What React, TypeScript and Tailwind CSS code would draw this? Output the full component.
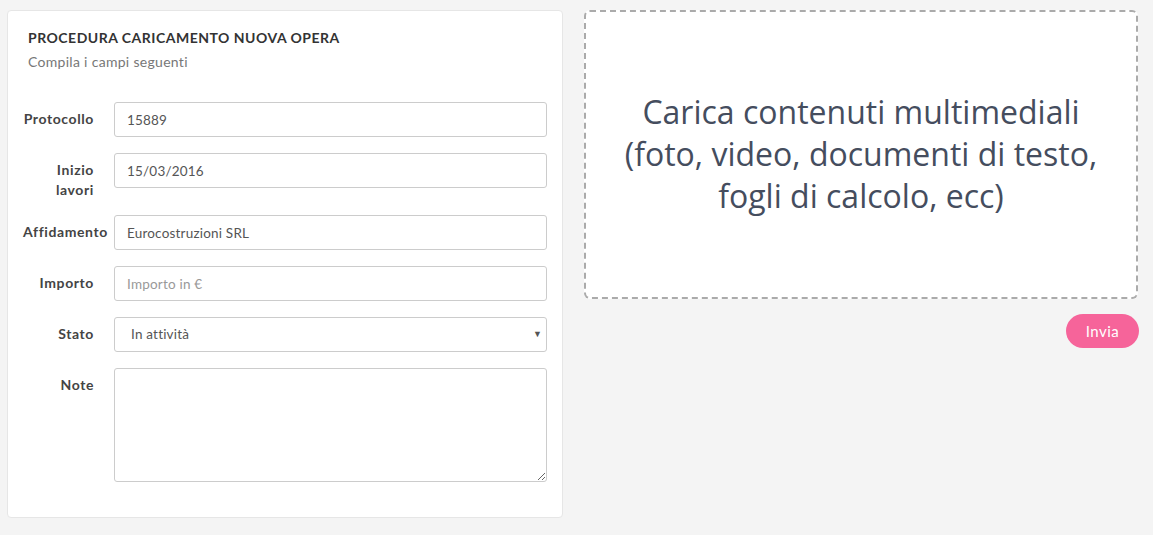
import React from "react";

const font = { fontFamily: "Lato, 'Noto Sans', sans-serif" };

function Field({ label, gap = "mb-[16px]", children }: { label: string; gap?: string; children: React.ReactNode }) {
  return (
    <div className={"flex items-start " + gap}>
      <label className="w-[71px] shrink-0 pt-[7px] text-right text-[14px] leading-[20px] font-bold tracking-[0.6px] text-[#444] whitespace-pre-line">
        {label}
      </label>
      <div className="ml-[20px] flex-1">{children}</div>
    </div>
  );
}

const inputCls =
  "w-full h-[35px] rounded-[3px] border border-[#ccc] bg-white px-[12px] text-[13.5px] tracking-[0.2px] text-[#555] placeholder:text-[#999] outline-none";

function App() {
  return (
    <div style={font} className="min-h-[535px] w-full bg-[#f4f4f4] pl-[7px] pr-[15px] pt-[10px]">
      <div className="flex gap-[21px]">
        <div className="w-[556px] h-[508px] shrink-0 rounded-[4px] border border-[#e6e6e6] bg-white pl-[15px] pr-[15px] pt-[17px]">
          <h2 className="pl-[5px] text-[14px] font-bold leading-[20px] text-[#333] tracking-[0.5px]">
            PROCEDURA CARICAMENTO NUOVA OPERA
          </h2>
          <p className="pl-[5px] mt-[4px] text-[14px] leading-[20px] tracking-[0.3px] text-[#777]">Compila i campi seguenti</p>

          <div className="mt-[30px]">
            <Field label="Protocollo">
              <input className={inputCls} defaultValue="15889" />
            </Field>
            <Field label={"Inizio\nlavori"} gap="mb-[15px]">
              <input className={inputCls} defaultValue="15/03/2016" />
            </Field>
            <Field label="Affidamento">
              <input className={inputCls} defaultValue="Eurocostruzioni SRL" />
            </Field>
            <Field label="Importo">
              <input className={inputCls} placeholder="Importo in €" />
            </Field>
            <Field label="Stato">
              <div className="relative">
                <select className={inputCls + " appearance-none pl-[16px]"} defaultValue="attiva">
                  <option value="attiva">In attività</option>
                  <option value="chiusa">Conclusa</option>
                </select>
                <span className="pointer-events-none absolute right-[5px] top-[10px] text-[9px] text-[#555]">▼</span>
              </div>
            </Field>
            <Field label="Note">
              <textarea className="block w-full h-[114px] rounded-[3px] border border-[#ccc] bg-white px-[12px] py-[6px] text-[13.5px] text-[#555] outline-none" />
            </Field>
          </div>
        </div>

        <div className="flex-1">
          <div className="h-[289px] rounded-[6px] border-2 border-dashed border-[#ababab] bg-white flex items-center justify-center">
            <p
              style={{ fontFamily: "'Open Sans', 'Noto Sans', sans-serif" }}
              className="text-center text-[32px] leading-[42px] text-[#454d5e] -mt-[2px]"
            >
              Carica contenuti multimediali
              <br />
              (foto, video, documenti di testo,
              <br />
              fogli di calcolo, ecc)
            </p>
          </div>
          <div className="flex justify-end mt-[15px] -mr-[1px]">
            <button className="h-[34px] w-[73px] rounded-full bg-[#f6649a] text-[15px] tracking-[0.5px] text-white">Invia</button>
          </div>
        </div>
      </div>
    </div>
  );
}

export default App;
